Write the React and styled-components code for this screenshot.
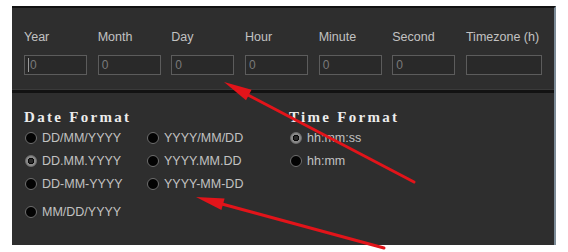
import styled, { createGlobalStyle } from "styled-components";

const Global = createGlobalStyle`
  html, body {
    margin: 0;
    background: #ffffff;
  }
  body {
    font-family: "Liberation Sans", Arial, sans-serif;
  }
`;

const Page = styled.div`
  position: relative;
  width: 568px;
  height: 252px;
  padding: 6px 0 0 12px;
  box-sizing: border-box;
`;

const Panel = styled.div`
  width: 544px;
  height: 239px;
  background: #2e2e2e;
  border-top: 2px solid #121212;
  border-right: 2px solid #7d8c98;
  display: flex;
  flex-direction: column;
  box-sizing: border-box;
`;

const Fields = styled.div`
  height: 82px;
  box-sizing: border-box;
  padding: 22px 0 0 12px;
  display: grid;
  grid-template-columns: repeat(6, 63px) 76px;
  column-gap: 10.67px;
  border-bottom: 1px solid #3a3a3a;
`;

const Field = styled.div`
  display: flex;
  flex-direction: column;
`;

const Label = styled.label`
  font-size: 12.5px;
  line-height: 15px;
  color: #c2c2c2;
  margin-bottom: 10px;
  white-space: nowrap;
`;

const Input = styled.div`
  height: 20px;
  box-sizing: border-box;
  border: 1px solid #5c5c5c;
  background: #292929;
  color: #7a7a7a;
  font-size: 12px;
  line-height: 18px;
  padding-left: 3px;
  display: flex;
  align-items: center;
`;

const Caret = styled.span`
  width: 1px;
  height: 14px;
  background: #9a9a9a;
  margin-right: 1px;
`;

const Divider = styled.div`
  height: 3px;
  background: #121212;
`;

const Formats = styled.div`
  flex: 1;
  display: flex;
  padding: 15px 0 0 12px;
`;

const Group = styled.div`
  width: ${(p) => p.$width}px;
`;

const Title = styled.div`
  font-family: "Liberation Serif", "Times New Roman", serif;
  font-weight: bold;
  font-size: 15px;
  line-height: 18px;
  color: #ececec;
  letter-spacing: 2.3px;
`;

const Options = styled.div`
  display: grid;
  grid-template-columns: 122px auto;
`;

const Option = styled.div`
  height: 23px;
  display: flex;
  align-items: center;
  gap: 5px;
  font-size: 12.5px;
  color: #c2c2c2;
  margin-top: ${(p) => (p.$gap ? 5 : 0)}px;
  grid-column: ${(p) => (p.$wide ? "1 / span 2" : "auto")};
`;

const Dot = styled.span`
  width: 12px;
  height: 12px;
  border-radius: 50%;
  box-sizing: border-box;
  flex: none;
  margin-left: 1px;
  border: 1px solid #6e6e6e;
  background: ${(p) =>
    p.$on
      ? "radial-gradient(circle, #2a2a2a 0 2px, #080808 2.5px 3px, #8a8a8a 3.5px)"
      : "#030303"};
`;

const Arrows = styled.svg`
  position: absolute;
  left: 0;
  top: 0;
  pointer-events: none;
`;

const fields = [
  { label: "Year", value: "0", caret: true },
  { label: "Month", value: "0" },
  { label: "Day", value: "0" },
  { label: "Hour", value: "0" },
  { label: "Minute", value: "0" },
  { label: "Second", value: "0" },
  { label: "Timezone (h)", value: "" },
];

const dateOptions = [
  { text: "DD/MM/YYYY" },
  { text: "YYYY/MM/DD" },
  { text: "DD.MM.YYYY", on: true },
  { text: "YYYY.MM.DD" },
  { text: "DD-MM-YYYY" },
  { text: "YYYY-MM-DD" },
  { text: "MM/DD/YYYY", gap: true, wide: true },
];

const timeOptions = [{ text: "hh:mm:ss", on: true }, { text: "hh:mm" }];

export default function App() {
  return (
    <Page>
      <Global />
      <Panel>
        <Fields>
          {fields.map((f) => (
            <Field key={f.label}>
              <Label>{f.label}</Label>
              <Input>
                {f.caret && <Caret />}
                {f.value}
              </Input>
            </Field>
          ))}
        </Fields>
        <Divider />
        <Formats>
          <Group $width={265}>
            <Title>Date Format</Title>
            <Options>
              {dateOptions.map((o) => (
                <Option key={o.text} $gap={o.gap} $wide={o.wide}>
                  <Dot $on={o.on} />
                  {o.text}
                </Option>
              ))}
            </Options>
          </Group>
          <Group $width={200}>
            <Title>Time Format</Title>
            {timeOptions.map((o) => (
              <Option key={o.text}>
                <Dot $on={o.on} />
                {o.text}
              </Option>
            ))}
          </Group>
        </Formats>
      </Panel>
      <Arrows width="568" height="252" viewBox="0 0 568 252">
        <line x1="248" y1="95" x2="414" y2="182" stroke="#e2141a" strokeWidth="3" strokeLinecap="round" />
        <polygon points="224,82 246,100.3 251.6,89.7" fill="#e2141a" />
        <line x1="222" y1="204" x2="384" y2="248" stroke="#e2141a" strokeWidth="3" strokeLinecap="round" />
        <polygon points="196,197 221.4,210.1 224.6,198.5" fill="#e2141a" />
      </Arrows>
    </Page>
  );
}
